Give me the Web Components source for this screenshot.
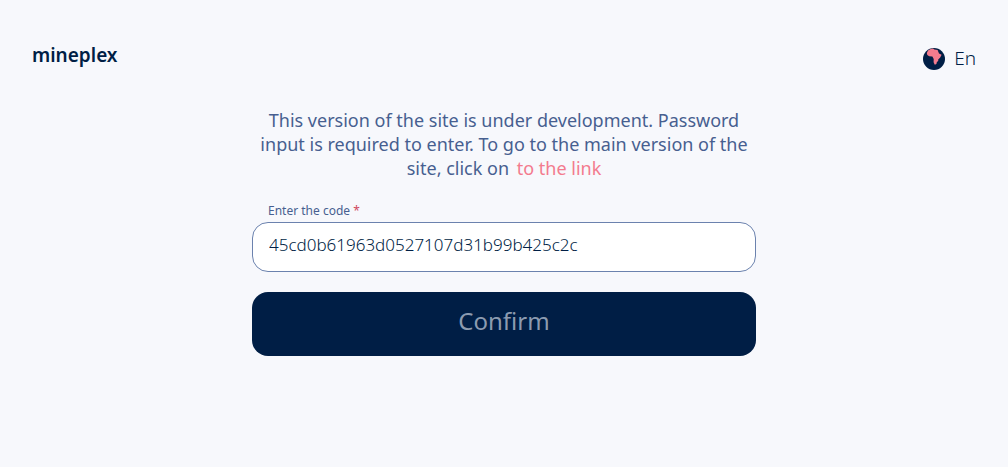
<!DOCTYPE html>
<html lang="en">
<head>
<meta charset="utf-8">
<meta name="viewport" content="width=device-width, initial-scale=1">
<title>mineplex</title>
<style>
  body { margin: 0; background: #f7f8fc; font-family: "Noto Sans", "Open Sans", sans-serif; color: #001e45; }
</style>
</head>
<body>
<site-page>
  <site-header slot="header">
    <brand-logo>mineplex</brand-logo>
    <language-switch slot="end">En</language-switch>
  </site-header>
  <access-form></access-form>
</site-page>
<script>
class Base extends HTMLElement {
  constructor() {
    super();
    this.attachShadow({ mode: "open" }).innerHTML = this.constructor.markup;
  }
}

class SitePage extends Base {
  static markup = `
    <style>
      :host { display: block; min-height: 100vh; }
      main { max-width: 504px; margin: 0 auto; padding: 32px 16px; }
    </style>
    <slot name="header"></slot>
    <main><slot></slot></main>`;
}

class SiteHeader extends Base {
  static markup = `
    <style>
      :host { display: block; }
      header { display: flex; justify-content: space-between; align-items: center; padding: 40px 32px 0; }
    </style>
    <header><slot></slot><slot name="end"></slot></header>`;
}

class BrandLogo extends Base {
  static markup = `
    <style>
      :host { display: block; }
      a { display: block; color: #001e45; text-decoration: none; font: 600 19px/24px "Noto Sans", sans-serif; padding-bottom: 6px; }
    </style>
    <a href="#"><slot></slot></a>`;
}

class LanguageSwitch extends Base {
  static markup = `
    <style>
      :host { display: block; }
      button { display: flex; align-items: center; gap: 9px; padding: 0; border: 0; background: none; color: #001e45; font: 300 19px/36px "Noto Sans", sans-serif; cursor: pointer; }
      svg { display: block; width: 22px; height: 22px; margin-top: 2px; }
    </style>
    <button type="button">
      <svg viewBox="0 0 22 22" aria-hidden="true">
        <circle cx="11" cy="11" r="11" fill="#001e45"/>
        <path d="M3.8 5 L5 2.4 L7.6 .9 L10 .4 L11.4 1.5 L14.6 1.9 L16 5.4 L18.6 6.8 L17.2 9.4 L15.2 11.4 L15.2 13 L13.9 13.9 L13.4 16 L11.8 16.7 L10.6 14.2 L10.7 11 L9.4 8.6 L6.2 8.2 L4.3 7 Z" fill="#f37b8e"/>
      </svg>
      <slot></slot>
    </button>`;
}

class CodeField extends Base {
  static markup = `
    <style>
      :host { display: block; }
      label { display: block; padding: 0 16px; font-size: 12px; line-height: 16px; color: #475f90; }
      span { color: #d0485c; }
      input { display: block; box-sizing: border-box; width: 100%; height: 50px; margin-top: 3px; padding: 0 16px 6px; border: 1px solid #6b82ae; border-radius: 16px; outline: 0; background: #fff; color: #001e45; font: 300 17px/24px "Noto Sans", sans-serif; }
    </style>
    <label for="code">Enter the code <span>*</span></label>
    <input id="code" type="text" required value="45cd0b61963d0527107d31b99b425c2c">`;
}

class ConfirmButton extends Base {
  static markup = `
    <style>
      :host { display: block; }
      button { display: block; width: 100%; height: 64px; padding: 0 16px 6px; border: 0; border-radius: 16px; background: #001e45; color: #8c9bb0; font: 400 24px/32px "Noto Sans", sans-serif; }
    </style>
    <button type="submit" disabled><slot></slot></button>`;
}

class AccessForm extends Base {
  static markup = `
    <style>
      :host { display: block; }
      p { margin: 0 0 23px; text-align: center; font-size: 18px; line-height: 24px; color: #475f90; }
      a { display: inline-block; margin-left: 3px; color: #f37b8e; text-decoration: none; }
      form { display: grid; gap: 20px; }
    </style>
    <p>This version of the site is under development. Password input is required to enter. To go to the main version of the site, click on <a href="#">to the link</a></p>
    <form>
      <code-field></code-field>
      <confirm-button>Confirm</confirm-button>
    </form>`;
}

customElements.define("site-page", SitePage);
customElements.define("site-header", SiteHeader);
customElements.define("brand-logo", BrandLogo);
customElements.define("language-switch", LanguageSwitch);
customElements.define("code-field", CodeField);
customElements.define("confirm-button", ConfirmButton);
customElements.define("access-form", AccessForm);
</script>
</body>
</html>
